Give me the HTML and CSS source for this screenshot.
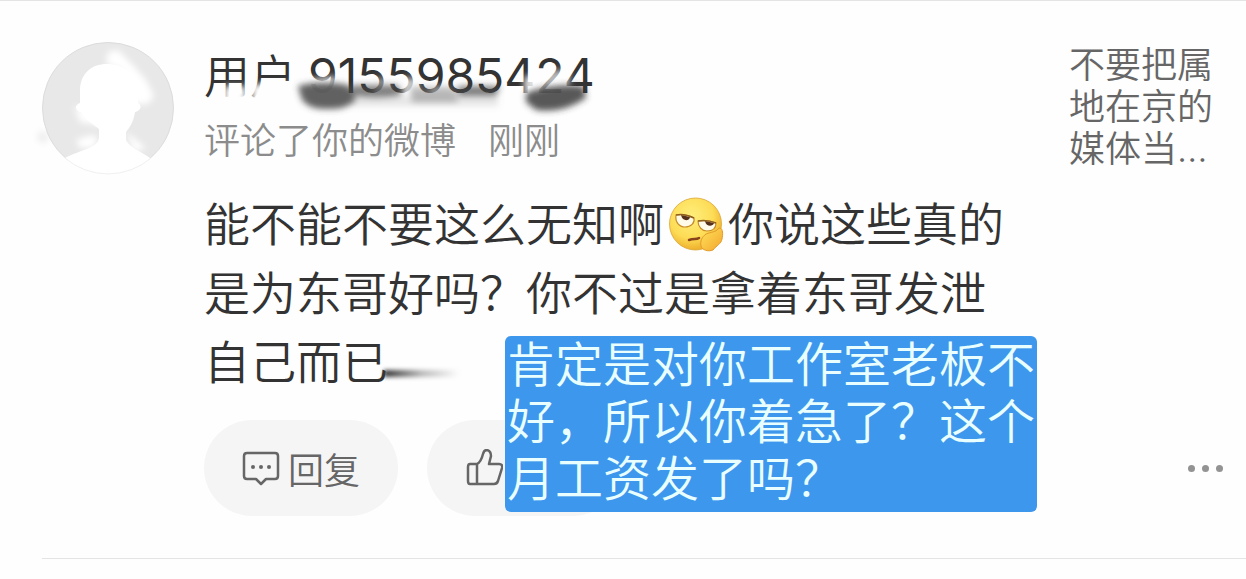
FILE: index.html
```html
<!DOCTYPE html>
<html lang="zh-CN">
<head>
<meta charset="utf-8">
<meta name="viewport" content="width=device-width, initial-scale=1">
<title>评论</title>
<link rel="stylesheet" href="styles.css">
</head>
<body>
<article class="comment">
  <svg class="avatar" viewBox="0 0 132 132" role="img" aria-label="用户头像">
    <defs>
      <filter id="soft" x="-60%" y="-60%" width="220%" height="220%"><feGaussianBlur stdDeviation="3"/></filter>
      <clipPath id="disc"><circle cx="66" cy="66" r="66"/></clipPath>
    </defs>
    <ellipse cx="1" cy="95" rx="6" ry="6" fill="#efefef" filter="url(#soft)"/>
    <circle cx="66" cy="66" r="65.5" fill="#e8e8e8" stroke="#dcdcdc"/>
    <g clip-path="url(#disc)" fill="#fff">
      <path d="M38 61V49C38 32 49 22 65 22S94 32 96 48V61C101 64 98 69 93 70C91 82 87 86 84 90V98C88 106 98 109 108 116L112 134H20L23 116C38 108 56 106 57 96V87C48 80 42 76 39 70C33 69 32 63 38 61Z"/>
      <g filter="url(#soft)">
        <path d="M66 10L76 8L90 22L104 38L112 54L106 62L92 62L80 28L64 22Z"/>
        <path d="M32 64L60 76L60 84L38 80ZM34 98L50 93L56 96L52 106L38 106ZM84 90L104 106L92 110Z"/>
      </g>
    </g>
    <path d="M23 116A66 66 0 0 0 109 116" fill="none" stroke="#f1f1f1"/>
  </svg>
  <div class="main">
    <header class="head">
      <div>
        <h1 class="name"><span>用户</span><span class="digits">9155985424</span>
          <svg class="smudge" viewBox="0 0 410 76" aria-hidden="true">
            <defs>
              <filter id="b3" x="-40%" y="-60%" width="180%" height="220%"><feGaussianBlur stdDeviation="3"/></filter>
            </defs>
            <g fill="#fefefe" filter="url(#b3)">
              <path d="M34 32H56V54H34ZM62 30H116V56H62Z"/>
              <path d="M116 26L146 22V46H116Z" opacity=".85"/>
              <path d="M184 24H200V42H184Z" opacity=".5"/>
              <path d="M212 24H228V46H212Z" opacity=".75"/>
              <path d="M240 32H256V46H240Z" opacity=".5"/>
              <path d="M334 22H352V46H334Z" opacity=".85"/>
              <path d="M354 16H380V46H354Z" opacity=".65"/>
            </g>
            <g filter="url(#b3)">
              <path d="M108 32Q130 26 158 31L166 46Q156 56 138 55Q120 56 112 46Z" fill="#444" opacity=".85"/>
              <path d="M162 31H208L212 41Q186 46 160 41Z" fill="#444" opacity=".68"/>
              <path d="M220 33H264L268 48H222Z" fill="#777" opacity=".5"/>
              <path d="M268 32H310L306 42H268Z" fill="#444" opacity=".7"/>
              <path d="M160 42H308V52H160Z" fill="#888" opacity=".2"/>
              <path d="M336 39Q362 29 394 32L396 44Q372 60 346 56L336 48Z" fill="#333" opacity=".82"/>
            </g>
          </svg>
        </h1>
        <p class="meta"><span>评论了你的微博</span><time>刚刚</time></p>
      </div>
      <p class="source">不要把属<br>地在京的<br>媒体当…</p>
    </header>
    <div class="body">
      <p class="text">能不能不要这么无知啊<svg class="emoji" viewBox="0 0 56 56" role="img" aria-label="费解">
        <defs>
          <radialGradient id="face" cx=".42" cy=".35" r=".65"><stop offset="0" stop-color="#ffef7c"/><stop offset=".65" stop-color="#fddc56"/><stop offset="1" stop-color="#eeb02c"/></radialGradient>
          <linearGradient id="hand" x1="0" y1="0" x2="1" y2="1"><stop offset="0" stop-color="#ffe35c"/><stop offset="1" stop-color="#f3a52c"/></linearGradient>
        </defs>
        <circle cx="27.500" cy="28" r="26" fill="url(#face)" stroke="#dca436" stroke-width=".8"/>
        <path d="M8 19C13 18 20 19 26 22C27 27 23 31 17 31C11 31 7 26 8 19Z" fill="#fffbe8" stroke="#c98d26" stroke-width="1.200"/>
        <path d="M30 25C36 24 43 25 48 27C48 32 45 35 39 35C34 35 30 31 30 25Z" fill="#fffbe8" stroke="#c98d26" stroke-width="1.200"/>
        <path d="M13 19L22 21C21 26 14 25 13 19ZM37 25L46 27C45 31 38 31 37 25Z" fill="#56301b"/>
        <path d="M8 19C13 18 20 19 26 22M30 25C36 24 43 25 48 27" fill="none" stroke="#8f601e" stroke-width="1.500"/>
        <path d="M21 44C26 42 28 44 31 42" fill="none" stroke="#8a421b" stroke-width="2.500" stroke-linecap="round"/>
        <path d="M52 32C55 33 55 38 54 43C53 48 49 49 45 54C40 56 34 54 33 50C32 45 34 41 38 38C43 36 48 36 50 33Q51 32 52 32Z" fill="url(#hand)" stroke="#e39a2a"/>
      </svg>你说这些真的<br>是为东哥好吗？你不过是拿着东哥发泄<br>自己而已<span class="trail"></span></p>
      <div class="actions">
        <button class="pill" type="button">
          <svg class="icon" viewBox="0 0 38 38" fill="none" stroke="#666" stroke-width="2.500" stroke-linejoin="round" aria-hidden="true"><path d="M5 4H33Q36 4 36 7V27Q36 30 33 30H24L19 35L14 30H5Q2 30 2 27V7Q2 4 5 4Z"/><g fill="#666" stroke="none"><circle cx="11" cy="18" r="2"/><circle cx="19" cy="18" r="2"/><circle cx="27" cy="18" r="2"/></g></svg>
          <span>回复</span>
        </button>
        <button class="pill" type="button" aria-label="赞">
          <svg class="icon" viewBox="0 0 38 38" fill="none" stroke="#666" stroke-width="2.500" stroke-linejoin="round" aria-hidden="true"><path d="M12 15V35H5Q3 35 3 32V18Q3 15 5 15ZM12 15Q16 13 18 5Q19 1 22 1Q26 2 26 7L24 15H34Q38 15 37 19L33 32Q32 35 29 35H12"/></svg>
        </button>
        <button class="more" type="button" aria-label="更多"><i></i><i></i><i></i></button>
      </div>
      <p class="note">肯定是对你工作室老板不<br>好，所以你着急了？这个<br>月工资发了吗？</p>
    </div>
  </div>
</article>
</body>
</html>
```
FILE: styles.css
```css
* { box-sizing: border-box; }
body {
  margin: 0;
  background: #fefefe;
  color: #333;
  font-family: Inter, "Noto Sans CJK SC", sans-serif;
  font-weight: 350;
  border-top: 1px solid #e4e4e4;
}
h1, p { margin: 0; font-weight: inherit; }
.comment {
  display: flex;
  gap: 30px;
  margin-left: 42px;
  padding: 41px 0 42px;
  border-bottom: 1px solid #e4e4e4;
}
.avatar { flex: none; width: 132px; height: 132px; overflow: visible; }
.main { flex: 1; min-width: 0; }
.head {
  display: flex;
  justify-content: space-between;
  padding-right: 33px;
}
.name {
  position: relative;
  display: flex;
  gap: 12px;
  font-size: 46px;
  line-height: 68px;
  white-space: nowrap;
}
.digits { font-size: 48px; font-weight: 400; }
.smudge {
  position: absolute;
  left: -14px;
  top: 12px;
  width: 410px;
  height: 76px;
}
.meta {
  position: relative;
  display: flex;
  gap: 32px;
  color: #8c8c8c;
  font-size: 36px;
  line-height: 62px;
  white-space: nowrap;
}
.source {
  padding-top: 2px;
  color: #666;
  font-size: 36px;
  line-height: 42px;
  white-space: nowrap;
}
.body { position: relative; padding-top: 18px; }
.text { font-size: 46px; line-height: 69px; white-space: nowrap; }
.emoji {
  width: 56px;
  height: 56px;
  margin: 0 4px;
  vertical-align: -11px;
}
.trail {
  display: inline-block;
  width: 76px;
  height: 7px;
  margin-left: -4px;
  vertical-align: 2px;
  background: linear-gradient(90deg, #333, #bbb 50%, #fefefe);
  filter: blur(2px);
}
.actions {
  display: flex;
  align-items: center;
  gap: 29px;
  padding: 23px 23px 0 0;
}
.pill {
  display: flex;
  align-items: center;
  gap: 8px;
  width: 194px;
  height: 96px;
  padding: 0 38px;
  border: 0;
  border-radius: 48px;
  background: #f5f5f5;
  color: #666;
  font: inherit;
  font-size: 36px;
  white-space: nowrap;
}
.icon { flex: none; width: 38px; height: 38px; }
.more {
  display: flex;
  gap: 7px;
  margin-left: auto;
  padding: 8px 0;
  border: 0;
  background: none;
}
.more i { width: 7px; height: 7px; border-radius: 50%; background: #939393; }
.note {
  position: absolute;
  left: 301px;
  top: 164px;
  padding: 0 2px 5px;
  border-radius: 6px;
  background: #3d97ed;
  color: #e9ffff;
  font-size: 48px;
  line-height: 57px;
  white-space: nowrap;
}
```
